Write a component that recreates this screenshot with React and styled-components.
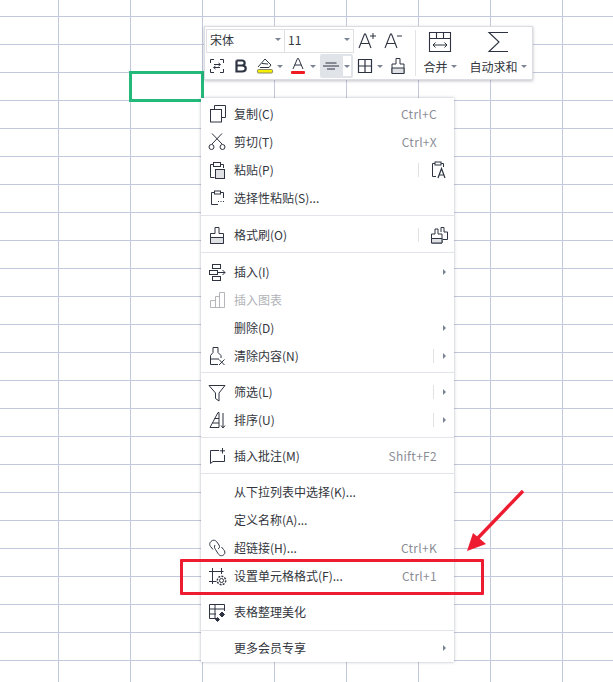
import React from 'react';
import styled, { createGlobalStyle } from 'styled-components';

const Global = createGlobalStyle`
  html, body { margin: 0; padding: 0; background: #fff; }
  body { font-family: "Noto Sans CJK SC", "Liberation Sans", sans-serif; font-size: 12px; color: #33363d; }
`;

const Sheet = styled.div`
  position: relative;
  width: 613px;
  height: 682px;
  overflow: hidden;
  background-color: #fff;
  background-image:
    linear-gradient(to right, #c3c9dc 1px, transparent 1px),
    linear-gradient(to bottom, #c3c9dc 1px, transparent 1px);
  background-size: 72px 28px;
  background-position: 58px 16px;
`;

const ActiveCell = styled.div`
  position: absolute;
  left: 129px;
  top: 71px;
  width: 69px;
  height: 25px;
  border: 3px solid #22b97b;
`;

/* floating mini toolbar */
const Toolbar = styled.div`
  position: absolute;
  left: 204px;
  top: 26px;
  width: 329px;
  height: 54px;
  box-sizing: border-box;
  display: flex;
  padding: 1px 0 0 1px;
  background: #fff;
  border: 1px solid #dcdde2;
  box-shadow: 0 1px 3px rgba(70, 75, 90, 0.35);
`;

const ToolColumn = styled.div`
  width: 205px;
  display: flex;
  flex-direction: column;
`;

const ToolRow = styled.div`
  display: flex;
  align-items: center;
  height: ${(p) => p.$h}px;
`;

const FontBox = styled.div`
  box-sizing: border-box;
  width: ${(p) => p.$w}px;
  height: 24px;
  display: flex;
  align-items: center;
  justify-content: space-between;
  padding: 0 3px 2px 3px;
  border: 1px solid #e0e0e3;
  margin-right: -1px;
  font-size: 12px;
  color: #33363d;
`;

const Caret = styled.i`
  display: block;
  width: 0;
  height: 0;
  flex: none;
  margin: ${(p) => p.$m || '0'};
  border-left: 3px solid transparent;
  border-right: 3px solid transparent;
  border-top: 3px solid #7b8494;
`;

const ToolButton = styled.div`
  width: ${(p) => p.$w}px;
  height: 24px;
  flex: none;
  display: flex;
  align-items: center;
  justify-content: center;
`;

const AlignButton = styled.div`
  width: 33px;
  height: 24px;
  flex: none;
  box-sizing: border-box;
  display: flex;
  align-items: center;
  justify-content: space-between;
  background: #e0e3e8;
  border-radius: 2px;
  padding: 2px;
  margin-right: 2px;
`;

const AlignCaret = styled.div`
  width: 8px;
  height: 20px;
  background: #fff;
  display: flex;
  align-items: center;
  justify-content: center;
`;

const ToolDivider = styled.div`
  width: 1px;
  height: 46px;
  margin: 2px 0 0 4px;
  background: #e2e3e6;
`;

const BigButton = styled.div`
  width: ${(p) => p.$w}px;
  display: flex;
  flex-direction: column;
  align-items: center;
  font-size: 12px;
  color: #33363d;
  padding-top: 2px;
`;

const BigLabel = styled.div`
  display: flex;
  align-items: center;
  height: 20px;
  margin-top: 2px;
  white-space: nowrap;
`;

/* context menu */
const Menu = styled.div`
  position: absolute;
  left: 201px;
  top: 98px;
  width: 253px;
  height: 564px;
  box-sizing: border-box;
  padding-top: 2px;
  background: #fff;
  box-shadow: 0 0 3px rgba(80, 90, 115, 0.45);
`;

const Row = styled.div`
  height: 28px;
  display: flex;
  align-items: center;
  color: ${(p) => (p.$disabled ? '#b1b3b8' : '#33363d')};
`;

const IconSlot = styled.div`
  width: ${(p) => p.$w || 33}px;
  height: 28px;
  flex: none;
  display: flex;
  align-items: center;
  padding-left: ${(p) => (p.$w ? 0 : 6)}px;
  box-sizing: border-box;
`;

const Label = styled.span`
  flex: 1;
  white-space: nowrap;
  font-size: 12px;
  padding-bottom: 2px;
`;

const Shortcut = styled.span`
  margin-right: 17px;
  padding-bottom: 2px;
  color: #8b8e96;
  font-size: 12px;
  letter-spacing: 0.3px;
`;

const Bar = styled.i`
  display: block;
  width: 1px;
  height: 14px;
  background: #e0e1e5;
  margin-right: ${(p) => p.$mr}px;
`;

const Arrow = styled.i`
  display: block;
  width: 0;
  height: 0;
  margin-right: 8px;
  border-top: 3px solid transparent;
  border-bottom: 3px solid transparent;
  border-left: 3px solid #7b8494;
`;

const Sep = styled.div`
  height: 1px;
  background: #e3e4ea;
  margin: ${(p) => p.$t}px 0 ${(p) => p.$b}px;
`;

const RedBox = styled.div`
  position: absolute;
  left: 180px;
  top: 559px;
  width: 298px;
  height: 30px;
  border: 3px solid #ee1c30;
  border-radius: 1px;
`;

const Overlay = styled.svg`
  position: absolute;
  left: 460px;
  top: 485px;
`;

const Ink = styled.svg`
  display: block;
  flex: none;
  fill: none;
  stroke: ${(p) => p.$c || '#2d3340'};
  stroke-width: 1;
`;

const Icon = ({ s = 20, c, children }) => (
  <Ink width={s} height={s} viewBox={`0 0 ${s} ${s}`} $c={c}>{children}</Ink>
);

const icons = {
  copy: <><path d="M7.5 5.5V1.5H18.5V13.5H14.5" /><rect x="3.5" y="5.5" width="11" height="12.5" /></>,
  cut: <><path d="M5 1.5L15 12M15 1.5L5 12" /><circle cx="4.5" cy="15" r="2.5" /><circle cx="15.5" cy="15" r="2.5" /></>,
  paste: <><path d="M7.5 17.5H3.5V4.5H6M14 4.5H16.5V8" /><rect x="6.5" y="2.5" width="7" height="4" /><rect x="8.5" y="9.5" width="9" height="9" fill="#dfe1e5" /></>,
  special: <><path d="M14 4.5H16.5V10M11 16.5H4.5V4.5H7" /><rect x="7.5" y="3" width="6" height="3" /><path d="M11 13.5h1M13.5 13.5h1M16 13.5h1" /></>,
  brush: <><path d="M8 2.5H12V8.5H16.5V18.5H3.5V8.5H8Z" /><path d="M3.5 12.5H16.5V18.5H3.5Z" fill="#dfe1e5" /></>,
  insert: <><rect x="5.5" y="2.5" width="8" height="4" /><rect x="2.5" y="8.5" width="8" height="4" /><rect x="5.5" y="14.5" width="8" height="4" /><path d="M11 10.5H18M15.5 8L18 10.5L15.5 13" /></>,
  chart: <><path d="M3.5 17.5V10.5H8.5V17.5M8.5 17.5V6.5H12.5V17.5M12.5 17.5V2.5H17.5V17.5H3.5" /></>,
  clear: <><path d="M6 1.5H11V6.5L14 9.5V12M3.5 18.5H11M3.5 18.5V9.5L6 6.5V1.5M3.5 13H12" /><path d="M12 13.5L17.5 19M17.5 13.5L12 19" /></>,
  filter: <><path d="M2 3.5H18L12 11V19L8.5 16.5V11Z" /></>,
  sort: <><path d="M11 2.5L3 17.5H12V2.5H11ZM5.5 13H12M7.5 8.5H12" /><path d="M16 3V17.5M14 15.5L16 18L18 15.5" /></>,
  note: <><path d="M12 4.5H3.5V17.5L6 15.5H17.5V9" /><path d="M15.5 2V7.5M12.8 4.8H18" /></>,
  link: <><path d="M4 3.5C6 1.5 8 2 9.5 3.5L12 7C13 9 12.5 10 11 11M8 7C7 8.5 7.5 10 8.5 11.5L11 15.5C12.5 18 15 18.5 17 16.5C18.5 15 18 13 16.5 11.5L14.5 9M4 3.5C2 5.5 2.5 7.5 4 9L6 11.5" /></>,
  format: <><path d="M5.5 2V18M2 5.5H16.5M2 15.5H9.5M14.5 2V8" /><circle cx="14.5" cy="14.5" r="2" /><circle cx="14.5" cy="14.5" r="4.2" strokeDasharray="2 1.2" strokeWidth="1.4" /></>,
  tidy: <><path d="M2.5 2.5H17.5V9M2.5 2.5V16.5H9M2.5 7H17.5M2.5 12H9M8 2.5V16.5" /><path d="M15 10L17.5 12.5L15 15L12.5 12.5ZM10.5 15.5L12.5 17.5L10.5 19.5L8.5 17.5Z" fill="#2d3340" /></>,
  pasteText: <><path d="M7 16.5H3.5V3.5H6M12 3.5H14.5V7" /><rect x="6" y="2" width="6" height="3" /><path d="M9 18L12.5 8.5L16 18M10.2 15H14.8" strokeWidth="1.2" /></>,
  brushes: <><path d="M12 7V2.5H15V7H18.5V14.5H14" /><path d="M6 4H9V9H13V18H2.5V9H6Z" /><path d="M2.5 13.5H13V18H2.5Z" fill="#dfe1e5" /></>,
};

const rows = [
  { icon: 'copy', text: '复制(C)', key: 'Ctrl+C' },
  { icon: 'cut', text: '剪切(T)', key: 'Ctrl+X' },
  { icon: 'paste', text: '粘贴(P)', side: 'pasteText' },
  { icon: 'special', text: '选择性粘贴(S)...' },
  { sep: [3, 5] },
  { icon: 'brush', text: '格式刷(O)', side: 'brushes' },
  { sep: [3, 5] },
  { icon: 'insert', text: '插入(I)', sub: true },
  { icon: 'chart', text: '插入图表', disabled: true },
  { text: '删除(D)', sub: true },
  { icon: 'clear', text: '清除内容(N)', bar: true, sub: true },
  { sep: [2, 5] },
  { icon: 'filter', text: '筛选(L)', bar: true, sub: true },
  { icon: 'sort', text: '排序(U)', bar: true, sub: true },
  { sep: [3, 4] },
  { icon: 'note', text: '插入批注(M)', key: 'Shift+F2' },
  { sep: [3, 4] },
  { text: '从下拉列表中选择(K)...' },
  { text: '定义名称(A)...' },
  { icon: 'link', text: '超链接(H)...', key: 'Ctrl+K' },
  { icon: 'format', text: '设置单元格格式(F)...', key: 'Ctrl+1' },
  { sep: [4, 3] },
  { icon: 'tidy', text: '表格整理美化' },
  { sep: [4, 3] },
  { text: '更多会员专享', sub: true },
];

function MenuRow({ row }) {
  const gray = row.disabled ? '#b4b6bb' : undefined;
  return (
    <Row $disabled={row.disabled}>
      <IconSlot>{row.icon && <Icon c={gray}>{icons[row.icon]}</Icon>}</IconSlot>
      <Label>{row.text}</Label>
      {row.key && <Shortcut>{row.key}</Shortcut>}
      {row.side && <Bar $mr={10} />}
      {row.side && <IconSlot $w={25}><Icon>{icons[row.side]}</Icon></IconSlot>}
      {row.bar && <Bar $mr={9} />}
      {row.sub && <Arrow />}
    </Row>
  );
}

function FloatingBar() {
  return (
    <Toolbar>
      <ToolColumn>
        <ToolRow $h={25}>
          <FontBox $w={79}>宋体<Caret /></FontBox>
          <FontBox $w={70}>11<Caret /></FontBox>
          <ToolButton $w={26}>
            <Icon>
              <path d="M3 17L8.5 3H9.5L15 17M5 12.5H13" strokeWidth="1.1" />
              <path d="M14 5H20M17 2V8" />
            </Icon>
          </ToolButton>
          <ToolButton $w={28}>
            <Icon>
              <path d="M2 17L7.5 3H8.5L14 17M4 12.5H12" strokeWidth="1.1" />
              <path d="M14 5H19" />
            </Icon>
          </ToolButton>
        </ToolRow>
        <ToolRow $h={26}>
          <ToolButton $w={21}>
            <Icon s={18}>
              <path d="M2.5 6V2.5H6M12 2.5H15.5V6M2.5 12V15.5H6M12 15.5H15.5V12" />
              <path d="M6 7.5H12M10.5 6L12.5 7.5L10.5 9M12 10.5H6M7.5 9L5.5 10.5L7.5 12" />
            </Icon>
          </ToolButton>
          <ToolButton $w={28}>
            <Icon s={16}>
              <path d="M3.5 2.5H9C12.5 2.5 12.5 7.5 9 7.5H3.5M9 7.5C14 7.5 14 13.5 9 13.5H3.5V2.5" strokeWidth="2.2" />
            </Icon>
          </ToolButton>
          <ToolButton $w={20}>
            <Icon>
              <path d="M3 11L10 3L16 9L14 11.5H5" />
              <path d="M7 7.5L13 8" />
              <rect x="2.5" y="13.5" width="15" height="3.5" rx="1" fill="#f8ee00" stroke="#8a8a6a" />
            </Icon>
          </ToolButton>
          <Caret $m="0 5px 0 2px" />
          <ToolButton $w={20}>
            <Icon>
              <path d="M5 13L9.5 2.5H10.5L15 13M6.8 9H13.2" />
              <rect x="3" y="15" width="14" height="3" rx="1" fill="#ef1c24" stroke="none" />
            </Icon>
          </ToolButton>
          <Caret $m="0 4px 0 2px" />
          <AlignButton>
            <Icon s={18}>
              <path d="M3.5 6H14.5M1 9H17M5 12H13" />
            </Icon>
            <AlignCaret><Caret /></AlignCaret>
          </AlignButton>
          <ToolButton $w={20}>
            <Icon s={18}>
              <path d="M2.5 2.5H15.5V15.5H2.5ZM9 2.5V15.5M2.5 9H15.5" strokeWidth="1.2" />
            </Icon>
          </ToolButton>
          <Caret $m="0 5px 0 2px" />
          <ToolButton $w={20}>
            <Icon s={18}>
              <path d="M7 1.5H11V7H15V16.5H3V7H7Z" />
              <path d="M3 11H15V16.5H3Z" fill="#dfe1e5" />
            </Icon>
          </ToolButton>
        </ToolRow>
      </ToolColumn>
      <ToolDivider />
      <BigButton $w={48}>
        <Icon s={24}>
          <path d="M1.5 2.5H22.5V21.5H1.5ZM1.5 8.5H22.5M8.5 2.5V8.5M15.5 2.5V8.5" strokeWidth="1.1" />
          <path d="M5 15H19M7.5 12.5L5 15L7.5 17.5M16.5 12.5L19 15L16.5 17.5" />
        </Icon>
        <BigLabel>合并<Caret $m="0 0 0 3px" /></BigLabel>
      </BigButton>
      <BigButton $w={68}>
        <Icon s={24}>
          <path d="M22 2.5H3L13 12L3 21.5H22" strokeWidth="1.1" />
        </Icon>
        <BigLabel>自动求和<Caret $m="0 0 0 3px" /></BigLabel>
      </BigButton>
    </Toolbar>
  );
}

export default function App() {
  return (
    <Sheet>
      <Global />
      <ActiveCell />
      <FloatingBar />
      <Menu>
        {rows.map((row, i) =>
          row.sep ? <Sep key={i} $t={row.sep[0]} $b={row.sep[1]} /> : <MenuRow key={i} row={row} />
        )}
      </Menu>
      <RedBox />
      <Overlay width="70" height="75" viewBox="0 0 70 75">
        <path d="M63 6L16 55" stroke="#ee1c30" strokeWidth="3.4" fill="none" />
        <path d="M7 66L13 48L26 59Z" fill="#ee1c30" />
      </Overlay>
    </Sheet>
  );
}
